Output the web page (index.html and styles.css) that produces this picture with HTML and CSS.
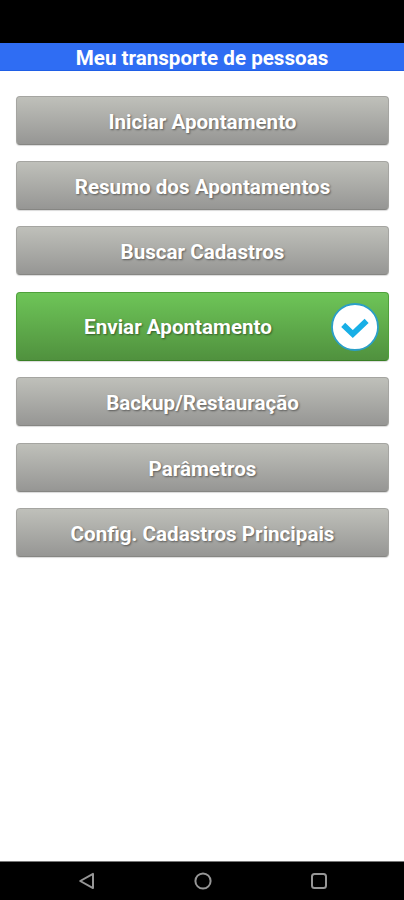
FILE: index.html
```
<!DOCTYPE html>
<html lang="pt-BR">
<head>
    <meta charset="UTF-8">
    <meta name="viewport" content="width=device-width, initial-scale=1.0">
    <title>Meu transporte de pessoas</title>
    <link rel="stylesheet" href="styles.css">
</head>
<body>
    <div class="status-bar"></div>
    <h1 class="title">Meu transporte de pessoas</h1>

    <main class="menu">
        <button class="menu-button"><span class="label">Iniciar Apontamento</span></button>
        <button class="menu-button"><span class="label">Resumo dos Apontamentos</span></button>
        <button class="menu-button"><span class="label">Buscar Cadastros</span></button>
        <button class="menu-button send">
            <span class="label">Enviar Apontamento</span>
            <svg class="check-icon" width="48" height="48" viewBox="0 0 48 48">
                <circle cx="24" cy="24" r="23" fill="#fff" stroke="#2a9fc8" stroke-width="1.8"/>
                <path d="M12.2 21.8 L21.8 31 L35.6 17.8" fill="none" stroke="#18afe6" stroke-width="5.8"/>
            </svg>
        </button>
        <button class="menu-button"><span class="label">Backup/Restauração</span></button>
        <button class="menu-button"><span class="label">Parâmetros</span></button>
        <button class="menu-button"><span class="label">Config. Cadastros Principais</span></button>
    </main>

    <nav class="nav-bar">
        <svg width="20" height="20" viewBox="0 0 20 20">
            <path d="M16 2.9 V17.1 L3.2 10 Z"/>
        </svg>
        <svg width="20" height="20" viewBox="0 0 20 20">
            <circle cx="10" cy="10" r="7.6"/>
        </svg>
        <svg width="20" height="20" viewBox="0 0 20 20">
            <rect x="3" y="3" width="14" height="14" rx="2.5"/>
        </svg>
    </nav>
</body>
</html>
```

FILE: styles.css
```
* {
    box-sizing: border-box;
}

body {
    margin: 0;
    height: 900px;
    display: flex;
    flex-direction: column;
    background-color: #fff;
    font-family: Roboto, "Liberation Sans", sans-serif;
    overflow: hidden;
}

.status-bar {
    height: 42.5px;
    background-color: #000;
}

.title {
    height: 28.5px;
    margin: 0;
    padding-top: 2px;
    background-color: #2f6df3;
    border-bottom: 1px solid #1f5fe6;
    color: #fff;
    font-size: 20.6px;
    font-weight: bold;
    line-height: 27px;
    text-align: center;
}

.menu {
    flex: 1;
    display: flex;
    flex-direction: column;
    gap: 16.35px;
    padding: 24.5px 15.4px 0 16.4px;
}

.menu-button {
    display: flex;
    align-items: center;
    height: 49px;
    padding: 3px 0 0;
    border: 1px solid #a5a5a1;
    border-bottom-color: #868683;
    border-radius: 4px;
    background: linear-gradient(#bfc0ba, #969694);
    box-shadow: 0 1px 1px rgba(0, 0, 0, 0.15);
    color: #fff;
    font-family: inherit;
    font-size: 20.6px;
    font-weight: bold;
    text-shadow: 1px 1px 2px rgba(0, 0, 0, 0.45);
}

.label {
    flex: 1;
    text-align: center;
}

.menu-button.send {
    height: 69.5px;
    padding: 2px 9px 0 8px;
    border-color: #4fa13b;
    border-bottom-color: #397f25;
    background: linear-gradient(#6ec558, #50913e);
}

.check-icon {
    flex: none;
}

.nav-bar {
    display: flex;
    align-items: center;
    justify-content: space-between;
    height: 39px;
    padding: 0 75.5px 0 77px;
    border-top: 1px solid #777;
    background-color: #000;
}

.nav-bar svg {
    fill: none;
    stroke: #969696;
    stroke-width: 2;
    stroke-linejoin: round;
}
```
